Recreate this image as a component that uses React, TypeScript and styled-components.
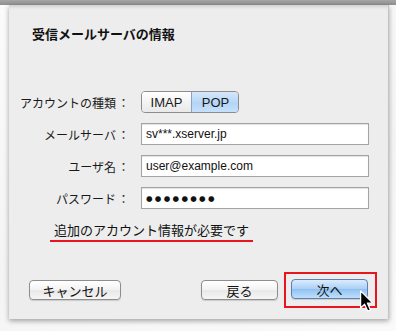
import React from "react";
import styled, { createGlobalStyle } from "styled-components";

const GlobalStyles = createGlobalStyle`
  * {
    margin: 0;
    padding: 0;
    box-sizing: border-box;
  }
  body {
    font-family: "Liberation Sans", "Noto Sans CJK JP", sans-serif;
    background: #f8f8f8;
  }
`;

const Page = styled.div`
  width: 396px;
  height: 331px;
  display: flex;
  flex-direction: column;
  overflow: hidden;
  background: linear-gradient(160deg, #fbfbfb 0%, #f4f4f4 60%, #fafafa 100%);
`;

const TopStrip = styled.div`
  height: 5px;
  flex-shrink: 0;
  background: linear-gradient(#a6a6a6, #8e8e8e);
`;

const Body = styled.div`
  flex: 1;
  display: flex;
  padding: 0 7px 12px 9px;
`;

const Panel = styled.div`
  flex: 1;
  display: flex;
  flex-direction: column;
  background: #ededed;
  border-right: 1px solid #c4c4c4;
  box-shadow: 0 2px 5px rgba(0, 0, 0, 0.35), inset 0 4px 4px -3px rgba(0, 0, 0, 0.18);
  padding: 21px 11px 11px 0;
`;

const Title = styled.h1`
  font-size: 13px;
  font-weight: bold;
  line-height: 18px;
  color: #111;
  padding-left: 23px;
`;

const FormGrid = styled.div`
  margin-top: 47px;
  display: grid;
  grid-template-columns: 122px 228px;
  column-gap: 10px;
  row-gap: 10px;
  grid-auto-rows: 22px;
  align-items: center;
`;

const Label = styled.div`
  display: flex;
  justify-content: flex-end;
  align-items: center;
  font-size: 12px;
  color: #1a1a1a;
  white-space: nowrap;
`;

const Colon = styled.span`
  width: 15px;
  text-align: center;
`;

const Segmented = styled.div`
  display: flex;
  width: 98px;
  height: 22px;
  border: 1px solid #8d8d8d;
  border-radius: 4px;
  overflow: hidden;
`;

const Segment = styled.div<{ $active?: boolean }>`
  flex: ${(p) => (p.$active ? "0 0 48px" : "0 0 49px")};
  display: flex;
  align-items: center;
  justify-content: center;
  font-size: 13px;
  color: #1a1a1a;
  background: ${(p) =>
    p.$active
      ? "linear-gradient(#d6e8fb, #b5d5f6 55%, #c6e0fa)"
      : "linear-gradient(#ffffff, #f2f2f2 55%, #e9e9e9)"};
  border-left: ${(p) => (p.$active ? "1px solid #8aa2c4" : "none")};
`;

const Field = styled.div`
  height: 22px;
  width: 228px;
  background: #fff;
  border: 1px solid #a3a3a3;
  box-shadow: inset 0 1px 1px rgba(0, 0, 0, 0.12);
  display: flex;
  align-items: center;
  padding-left: 4px;
  font-size: 12px;
  color: #111;
`;

const Dots = styled.span`
  font-family: "DejaVu Sans", sans-serif;
  font-size: 7.5px;
  letter-spacing: 2.3px;
  color: #111;
`;

const Notice = styled.div`
  margin-top: 14px;
  margin-left: 41px;
  align-self: flex-start;
  padding: 0 4px 1px 4px;
  font-size: 13px;
  line-height: 16px;
  color: #111;
  border-bottom: 2px solid #e8141e;
`;

const Footer = styled.div`
  margin-top: auto;
  display: flex;
  align-items: center;
  padding-left: 20px;
`;

const Button = styled.div<{ $primary?: boolean; $w: number }>`
  width: ${(p) => p.$w}px;
  height: 20px;
  border-radius: 4px;
  display: flex;
  align-items: center;
  justify-content: center;
  font-size: 13px;
  color: #111;
  border: 1px solid ${(p) => (p.$primary ? "#5d7fb3" : "#8e8e8e")};
  background: ${(p) =>
    p.$primary
      ? "linear-gradient(#dcecfd, #a9cff6 50%, #8fc0f2 51%, #bfe0fb)"
      : "linear-gradient(#ffffff, #f3f3f3 50%, #e8e8e8 51%, #f5f5f5)"};
  box-shadow: 0 1px 1px rgba(0, 0, 0, 0.15);
`;

const Spacer = styled.div`
  flex: 1;
`;

const Highlight = styled.div`
  position: relative;
  margin-left: 6px;
  border: 2px solid #e8141e;
  padding: 5px 7px 7px 5px;
`;

const Cursor = styled.svg`
  position: absolute;
  left: 73px;
  top: 15px;
  width: 16px;
  height: 24px;
`;

export default function App() {
  return (
    <>
      <GlobalStyles />
      <Page>
        <TopStrip />
        <Body>
          <Panel>
            <Title>受信メールサーバの情報</Title>
            <FormGrid>
              <Label>
                アカウントの種類<Colon>：</Colon>
              </Label>
              <Segmented>
                <Segment>IMAP</Segment>
                <Segment $active>POP</Segment>
              </Segmented>
              <Label>
                メールサーバ<Colon>：</Colon>
              </Label>
              <Field>sv***.xserver.jp</Field>
              <Label>
                ユーザ名<Colon>：</Colon>
              </Label>
              <Field>user@example.com</Field>
              <Label>
                パスワード<Colon>：</Colon>
              </Label>
              <Field>
                <Dots>●●●●●●●●</Dots>
              </Field>
            </FormGrid>
            <Notice>追加のアカウント情報が必要です</Notice>
            <Footer>
              <Button $w={92}>キャンセル</Button>
              <Spacer />
              <Button $w={77}>戻る</Button>
              <Highlight>
                <Button $primary $w={77}>次へ</Button>
                <Cursor viewBox="0 0 15 22">
                  <path
                    d="M1.5 1.5 L1.5 17.5 L5.2 14 L8.2 20.5 L10.8 19.4 L7.9 13 L13 13 Z"
                    fill="#000"
                    stroke="#fff"
                    strokeWidth="1.2"
                    strokeLinejoin="round"
                  />
                </Cursor>
              </Highlight>
            </Footer>
          </Panel>
        </Body>
      </Page>
    </>
  );
}
